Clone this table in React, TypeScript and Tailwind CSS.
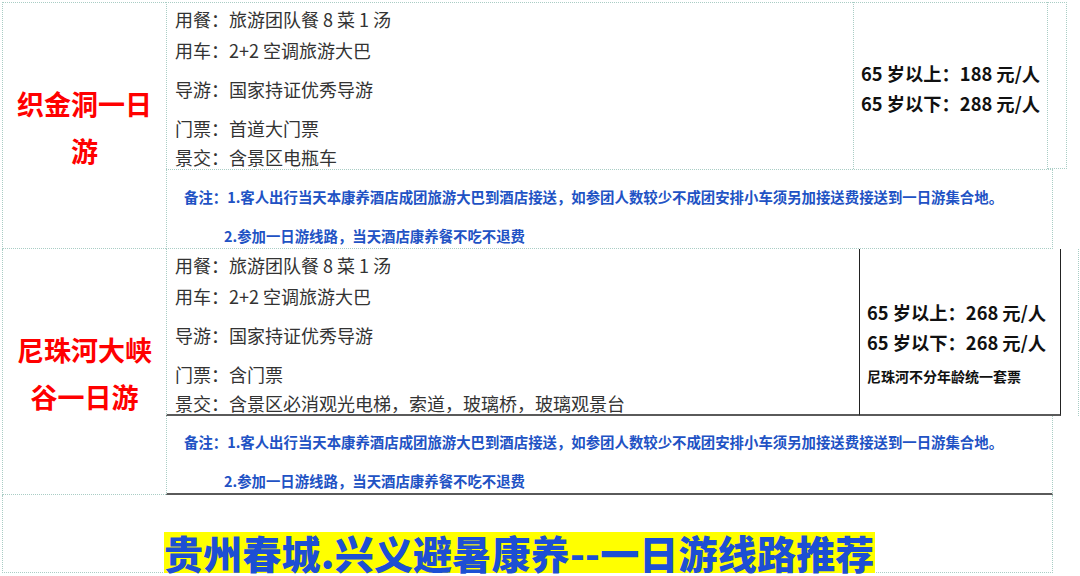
import React from "react";

const grid = "border-dotted border-[#a9cdc5]";

function Details({ ticket, scenic }: { ticket: string; scenic: string }) {
  return (
    <div className="pl-[8px] pt-[3px] text-[18px] leading-[26px] text-[#333] whitespace-nowrap">
      <div>用餐：旅游团队餐 8 菜 1 汤</div>
      <div className="mt-[5px]">用车：2+2 空调旅游大巴</div>
      <div className="mt-[13px]">导游：国家持证优秀导游</div>
      <div className="mt-[13px]">门票：{ticket}</div>
      <div className="mt-[3px]">景交：{scenic}</div>
    </div>
  );
}

function Note({ top }: { top: string }) {
  return (
    <div className="text-[14.4px] leading-[20px] font-bold text-[#2152c4] whitespace-nowrap">
      <div className={`pl-[17px] ${top}`}>
        备注：1.客人出行当天本康养酒店成团旅游大巴到酒店接送，如参团人数较少不成团安排小车须另加接送费接送到一日游集合地。
      </div>
      <div className="pl-[57px] mt-[19px]">2.参加一日游线路，当天酒店康养餐不吃不退费</div>
    </div>
  );
}

export default function App() {
  return (
    <div className="w-[1080px] h-[576px] overflow-hidden bg-white pt-[2px] pl-[2px] font-['Noto_Sans_CJK_SC','Noto_Sans',sans-serif]">
      {/* Section 1 */}
      <div className="flex">
        <div className={`w-[164px] h-[247px] border-l border-t border-b ${grid} pt-[77px] text-center text-[27px] leading-[47px] font-bold text-[#ff0000]`}>
          <div>织金洞一日</div>
          <div>游</div>
        </div>
        <div className="flex flex-col">
          <div className="flex h-[167px]">
            <div className={`w-[687px] border-l border-t ${grid}`}>
              <Details ticket="首道大门票" scenic="含景区电瓶车" />
            </div>
            <div className={`w-[194px] border-l border-t ${grid} pl-[7px] pt-[55px] text-[18.3px] leading-[30px] font-bold text-[#111] whitespace-nowrap`}>
              <div>65 岁以上：188 元/人</div>
              <div>65 岁以下：288 元/人</div>
            </div>
            <div className={`w-[20px] border-l border-t border-r border-b ${grid}`} />
          </div>
          <div className={`w-[887px] h-[80px] border-l border-t border-r border-b ${grid}`}>
            <Note top="mt-[17px]" />
          </div>
        </div>
      </div>

      {/* Section 2 */}
      <div className="flex">
        <div className={`w-[164px] h-[246px] border-l border-b ${grid} pt-[77px] text-center text-[27px] leading-[47px] font-bold text-[#ff0000]`}>
          <div>尼珠河大峡</div>
          <div>谷一日游</div>
        </div>
        <div className="flex flex-col">
          <div className="flex h-[167px]">
            <div className={`w-[694px] border-l ${grid} border-r border-r-[#222] [border-right-style:solid] border-b-2 border-b-[#5a5a5a] [border-bottom-style:solid]`}>
              <Details ticket="含门票" scenic="含景区必消观光电梯，索道，玻璃桥，玻璃观景台" />
            </div>
            <div className="w-[201px] border-r border-solid border-r-[#222] border-b-2 border-b-[#5a5a5a] pl-[7px] pt-[48px] text-[18.3px] leading-[30px] font-bold text-[#111] whitespace-nowrap">
              <div>65 岁以上：268 元/人</div>
              <div>65 岁以下：268 元/人</div>
              <div className="mt-[7px] text-[14px] leading-[24px]">尼珠河不分年龄统一套票</div>
            </div>
            <div className={`w-[18px] border-r ${grid}`} />
          </div>
          <div className={`w-[887px] h-[79px] border-l border-r ${grid} border-b-2 border-b-[#5a5a5a] [border-bottom-style:solid]`}>
            <Note top="mt-[16px]" />
          </div>
        </div>
      </div>

      {/* Section 3 */}
      <div className={`w-[1051px] h-[78px] border-l border-r border-b ${grid} pl-[161px]`}>
        <div className="mt-[37px] inline-block bg-[#ffff00] text-[39px] leading-[41px] font-black text-[#1d4fd4] whitespace-nowrap tracking-[0.2px]">
          贵州春城.兴义避暑康养--一日游线路推荐
        </div>
      </div>
    </div>
  );
}
